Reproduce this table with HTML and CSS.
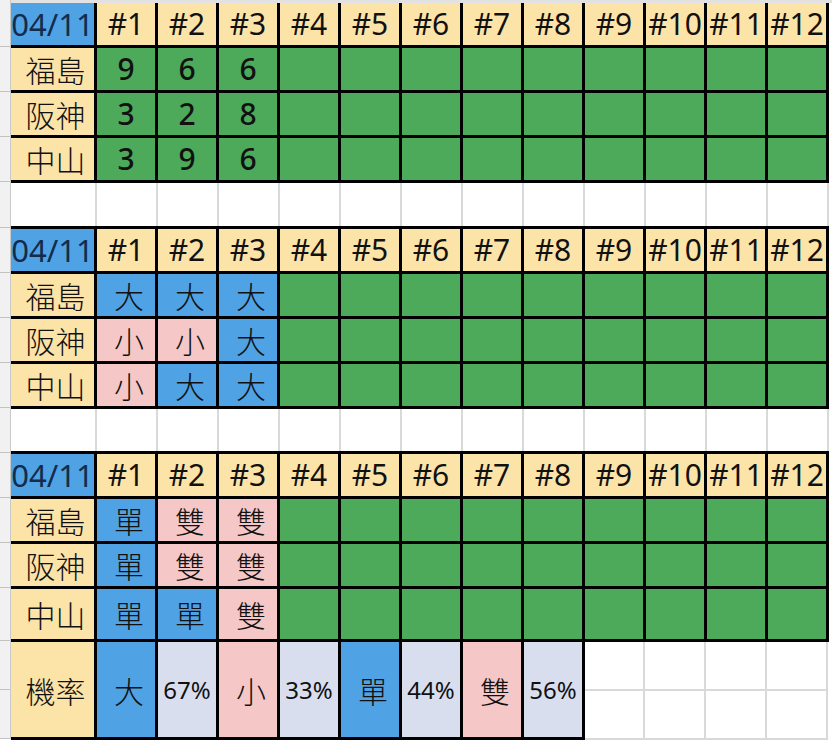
FILE: index.html
```html
<!DOCTYPE html>
<html lang="zh-Hant">
<head>
<meta charset="utf-8">
<title>04/11</title>
<link rel="stylesheet" href="styles.css">
</head>
<body>
<div class="sheet">
  <div class="gutter">
    <div class="gr h47"></div><div class="gr"></div><div class="gr"></div><div class="gr"></div>
    <div class="gr h46"></div><div class="gr"></div><div class="gr"></div><div class="gr"></div>
    <div class="gr"></div><div class="gr"></div><div class="gr"></div><div class="gr"></div>
    <div class="gr"></div><div class="gr h53"></div><div class="gr h49"></div><div class="gr h49"></div>
  </div>
  <div class="main">
    <div class="topline"></div>

    <div class="tbl">
      <div class="c date">04/11</div>
      <div class="c hd">#1</div><div class="c hd">#2</div><div class="c hd">#3</div><div class="c hd">#4</div>
      <div class="c hd">#5</div><div class="c hd">#6</div><div class="c hd">#7</div><div class="c hd">#8</div>
      <div class="c hd">#9</div><div class="c hd">#10</div><div class="c hd">#11</div><div class="c hd">#12</div>

      <div class="c lb">福島</div>
      <div class="c g num">9</div><div class="c g num">6</div><div class="c g num">6</div>
      <div class="c g"></div><div class="c g"></div><div class="c g"></div><div class="c g"></div><div class="c g"></div>
      <div class="c g"></div><div class="c g"></div><div class="c g"></div><div class="c g"></div>

      <div class="c lb">阪神</div>
      <div class="c g num">3</div><div class="c g num">2</div><div class="c g num">8</div>
      <div class="c g"></div><div class="c g"></div><div class="c g"></div><div class="c g"></div><div class="c g"></div>
      <div class="c g"></div><div class="c g"></div><div class="c g"></div><div class="c g"></div>

      <div class="c lb">中山</div>
      <div class="c g num">3</div><div class="c g num">9</div><div class="c g num">6</div>
      <div class="c g"></div><div class="c g"></div><div class="c g"></div><div class="c g"></div><div class="c g"></div>
      <div class="c g"></div><div class="c g"></div><div class="c g"></div><div class="c g"></div>
    </div>

    <div class="blank b43">
      <div></div><div></div><div></div><div></div><div></div><div></div><div></div>
      <div></div><div></div><div></div><div></div><div></div><div></div>
    </div>

    <div class="tbl top">
      <div class="c date">04/11</div>
      <div class="c hd">#1</div><div class="c hd">#2</div><div class="c hd">#3</div><div class="c hd">#4</div>
      <div class="c hd">#5</div><div class="c hd">#6</div><div class="c hd">#7</div><div class="c hd">#8</div>
      <div class="c hd">#9</div><div class="c hd">#10</div><div class="c hd">#11</div><div class="c hd">#12</div>

      <div class="c lb">福島</div>
      <div class="c b cj">大</div><div class="c b cj">大</div><div class="c b cj">大</div>
      <div class="c g"></div><div class="c g"></div><div class="c g"></div><div class="c g"></div><div class="c g"></div>
      <div class="c g"></div><div class="c g"></div><div class="c g"></div><div class="c g"></div>

      <div class="c lb">阪神</div>
      <div class="c p cj">小</div><div class="c p cj">小</div><div class="c b cj">大</div>
      <div class="c g"></div><div class="c g"></div><div class="c g"></div><div class="c g"></div><div class="c g"></div>
      <div class="c g"></div><div class="c g"></div><div class="c g"></div><div class="c g"></div>

      <div class="c lb">中山</div>
      <div class="c p cj">小</div><div class="c b cj">大</div><div class="c b cj">大</div>
      <div class="c g"></div><div class="c g"></div><div class="c g"></div><div class="c g"></div><div class="c g"></div>
      <div class="c g"></div><div class="c g"></div><div class="c g"></div><div class="c g"></div>
    </div>

    <div class="blank b42">
      <div></div><div></div><div></div><div></div><div></div><div></div><div></div>
      <div></div><div></div><div></div><div></div><div></div><div></div>
    </div>

    <div class="tbl top t3">
      <div class="c date">04/11</div>
      <div class="c hd">#1</div><div class="c hd">#2</div><div class="c hd">#3</div><div class="c hd">#4</div>
      <div class="c hd">#5</div><div class="c hd">#6</div><div class="c hd">#7</div><div class="c hd">#8</div>
      <div class="c hd">#9</div><div class="c hd">#10</div><div class="c hd">#11</div><div class="c hd">#12</div>

      <div class="c lb">福島</div>
      <div class="c b cj">單</div><div class="c p cj">雙</div><div class="c p cj">雙</div>
      <div class="c g"></div><div class="c g"></div><div class="c g"></div><div class="c g"></div><div class="c g"></div>
      <div class="c g"></div><div class="c g"></div><div class="c g"></div><div class="c g"></div>

      <div class="c lb">阪神</div>
      <div class="c b cj">單</div><div class="c p cj">雙</div><div class="c p cj">雙</div>
      <div class="c g"></div><div class="c g"></div><div class="c g"></div><div class="c g"></div><div class="c g"></div>
      <div class="c g"></div><div class="c g"></div><div class="c g"></div><div class="c g"></div>

      <div class="c lb">中山</div>
      <div class="c b cj">單</div><div class="c b cj">單</div><div class="c p cj">雙</div>
      <div class="c g"></div><div class="c g"></div><div class="c g"></div><div class="c g"></div><div class="c g"></div>
      <div class="c g"></div><div class="c g"></div><div class="c g"></div><div class="c g"></div>
    </div>

    <div class="probrow">
      <div class="prob">
        <div class="c lb">機率</div>
        <div class="c b cj">大</div>
        <div class="c l">67%</div>
        <div class="c p cj">小</div>
        <div class="c l">33%</div>
        <div class="c b cj">單</div>
        <div class="c l">44%</div>
        <div class="c p cj">雙</div>
        <div class="c l">56%</div>
      </div>
      <div class="tail">
        <div></div><div></div><div></div><div></div>
        <div></div><div></div><div></div><div></div>
      </div>
    </div>
  </div>
</div>
</body>
</html>
```

FILE: styles.css
```css
* {
  box-sizing: border-box;
  margin: 0;
  padding: 0;
}

html,
body {
  width: 832px;
  height: 741px;
  overflow: hidden;
  background: #ffffff;
}

body {
  font-family: "Noto Sans", "Noto Sans CJK TC", sans-serif;
  color: #111111;
}

.sheet {
  display: flex;
  align-items: flex-start;
}

.gutter {
  width: 11px;
  flex: none;
  background: #f1f1f1;
  border-right: 1px solid #cacaca;
  display: flex;
  flex-direction: column;
}

.gr {
  flex: none;
  height: 45px;
  border-bottom: 1px solid #c2c2c2;
}

.gr.h47 { height: 47px; }
.gr.h46 { height: 46px; }
.gr.h53 { height: 53px; }
.gr.h49 { height: 49px; }

.main {
  display: flex;
  flex-direction: column;
  flex: 1;
}

.topline {
  height: 3px;
  background: #e2e2e2;
}

.tbl {
  display: grid;
  grid-template-columns: 83px repeat(12, 58px);
  grid-auto-rows: 42px;
  gap: 3px;
  background: #000000;
  padding: 0 3px 3px 0;
  width: max-content;
}

.tbl.top {
  padding-top: 3px;
}

.tbl.t3 {
  grid-template-rows: 42px 42px 42px 50px;
}

.blank {
  display: grid;
  grid-template-columns: 84px repeat(12, 59px);
  column-gap: 2px;
  background: #d9d9d9;
  padding-right: 2px;
  width: max-content;
}

.blank div {
  background: #ffffff;
}

.blank.b43 { height: 43px; }
.blank.b42 { height: 42px; }

.c {
  display: flex;
  align-items: center;
  justify-content: center;
  overflow: hidden;
  white-space: nowrap;
  font-size: 30px;
  line-height: 1;
}

.date {
  background: #4fa3e5;
  color: #142c4b;
  font-size: 31px;
}

.hd {
  background: #fce3a8;
}

.lb {
  background: #fce3a8;
  padding-left: 6px;
  font-family: "Noto Sans CJK TC", sans-serif;
  font-weight: 300;
  font-size: 30px;
}

.g {
  background: #4caa5a;
}

.num {
  font-weight: 500;
}

.b {
  background: #4fa3e5;
}

.p {
  background: #f5c7c7;
}

.l {
  background: #d9deee;
  font-size: 24px;
}

.cj {
  padding-left: 6px;
  font-family: "Noto Sans CJK TC", sans-serif;
  font-weight: 300;
  font-size: 30px;
}

.probrow {
  display: flex;
}

.prob {
  display: grid;
  grid-template-columns: 83px repeat(8, 58px);
  gap: 3px;
  background: #000000;
  padding: 0 3px 3px 0;
  height: 98px;
}

.tail {
  display: grid;
  grid-template-columns: 58px repeat(3, 59px);
  grid-template-rows: 47px 47px;
  gap: 2px;
  background: #d9d9d9;
  padding: 0 2px 2px 0;
  height: 98px;
}

.tail div {
  background: #ffffff;
}
```
